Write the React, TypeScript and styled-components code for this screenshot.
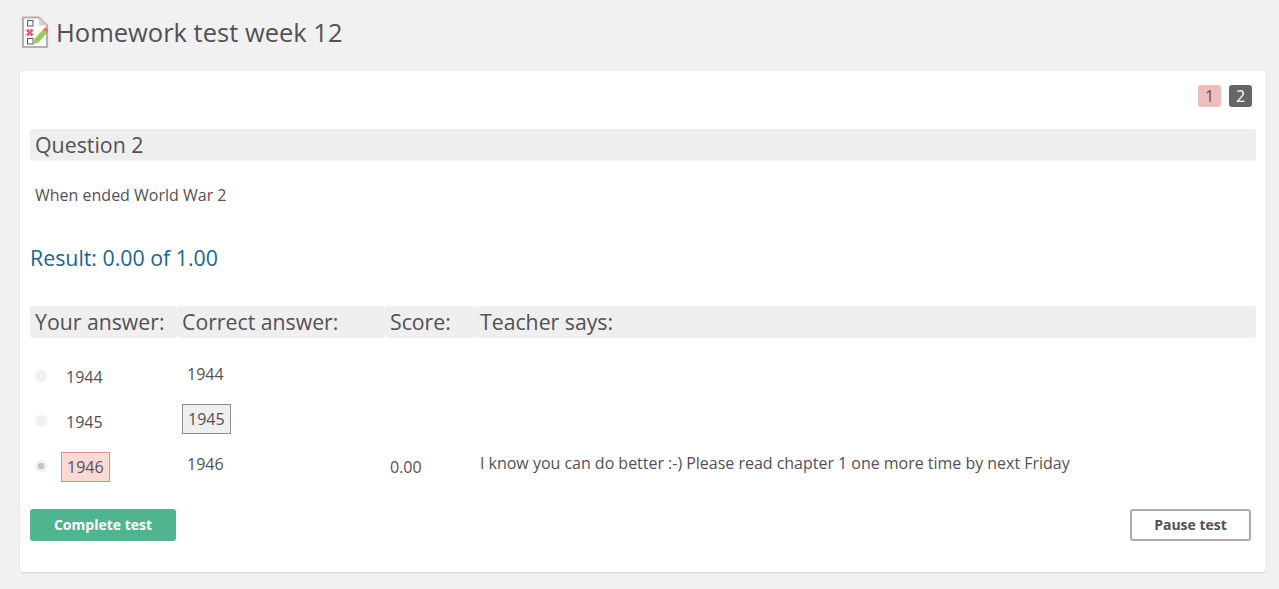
import * as React from 'react';
import styled, { createGlobalStyle } from 'styled-components';

const GlobalStyle = createGlobalStyle`
  html, body {
    margin: 0;
    padding: 0;
    background: #f1f1f1;
  }
  body {
    font-family: "Open Sans", "Liberation Sans", sans-serif;
    color: #555053;
  }
  * {
    box-sizing: border-box;
  }
`;

const rows = [
  { year: '1944', selected: false, correct: false, score: '', comment: '' },
  { year: '1945', selected: false, correct: true, score: '', comment: '' },
  {
    year: '1946',
    selected: true,
    correct: false,
    score: '0.00',
    comment: 'I know you can do better :-) Please read chapter 1 one more time by next Friday',
  },
];

function TestIcon() {
  return (
    <svg width="28" height="33" viewBox="0 0 28 33" aria-hidden="true">
      <path d="M2 1.500h16l8 8v21.500H2z" fill="#fff" stroke="#b5b0b3" strokeWidth="2.200" />
      <path d="M18 1.500v8h8z" fill="#d5d1d3" />
      <rect x="6.500" y="4.500" width="5.500" height="5.500" fill="#fff" stroke="#5d585b" strokeWidth="1" />
      <path d="M6 13.500l5.500 6M11.500 13.500l-5.500 6" stroke="#ea5f68" strokeWidth="2.600" />
      <rect x="6.500" y="22.500" width="5.500" height="5.500" fill="#fff" stroke="#5d585b" strokeWidth="1" />
      <path d="M13.500 23l8.500-9.500 4 3.500-8.500 9.500-5 1.500z" fill="#9bc85a" />
      <path d="M22 13.500l2-2.300 3.300 2.800-1.300 3z" fill="#ee6b6e" />
    </svg>
  );
}

export default function App() {
  return (
    <>
      <GlobalStyle />
      <Page>
        <Header>
          <TestIcon />
          <Title>Homework test week 12</Title>
        </Header>
        <Card>
          <Pager>
            <PageBadge $state="wrong">1</PageBadge>
            <PageBadge $state="current">2</PageBadge>
          </Pager>
          <QuestionTitle>Question 2</QuestionTitle>
          <QuestionText>When ended World War 2</QuestionText>
          <Result>Result: 0.00 of 1.00</Result>
          <AnswerGrid>
            <HeadCell>Your answer:</HeadCell>
            <HeadCell>Correct answer:</HeadCell>
            <HeadCell>Score:</HeadCell>
            <HeadCell>Teacher says:</HeadCell>
            {rows.map((row) => (
              <React.Fragment key={row.year}>
                <YourCell>
                  <Radio $checked={row.selected} />
                  <YourValue $wrong={row.selected}>{row.year}</YourValue>
                </YourCell>
                <CorrectCell>
                  <CorrectValue $correct={row.correct}>{row.year}</CorrectValue>
                </CorrectCell>
                <ScoreCell>{row.score}</ScoreCell>
                <CommentCell>{row.comment}</CommentCell>
              </React.Fragment>
            ))}
          </AnswerGrid>
          <Actions>
            <CompleteButton>Complete test</CompleteButton>
            <PauseButton>Pause test</PauseButton>
          </Actions>
        </Card>
      </Page>
    </>
  );
}

const Page = styled.div`
  width: 1279px;
  height: 589px;
  padding: 16px 13px 0 20px;
  overflow: hidden;
`;
const Header = styled.div`
  height: 33px;
  display: flex;
  align-items: center;
  gap: 7px;
  margin-left: 1px;
`;
const Title = styled.h1`
  margin: 0;
  font-size: 25.500px;
  font-weight: 400;
  line-height: 33px;
  color: #544f59;
`;
const Card = styled.div`
  margin-top: 22px;
  height: 501px;
  padding: 14px 10px 0;
  background: #fff;
  border-radius: 3px;
  box-shadow: 0 1px 2px rgba(0, 0, 0, 0.13);
`;
const Pager = styled.div`
  display: flex;
  justify-content: flex-end;
  gap: 8px;
  margin-right: 4px;
`;
const PageBadge = styled.span<{ $state: 'wrong' | 'current' }>`
  width: 23px;
  height: 22px;
  border-radius: 3px;
  display: flex;
  align-items: center;
  justify-content: center;
  font-size: 16px;
  background: ${(p) => (p.$state === 'wrong' ? '#efbdbd' : '#666666')};
  color: ${(p) => (p.$state === 'wrong' ? '#6b4b4b' : '#ffffff')};
`;
const QuestionTitle = styled.h2`
  margin: 22px 0 0;
  height: 32px;
  padding-left: 5px;
  background: #efefef;
  border-radius: 3px;
  font-size: 21.330px;
  font-weight: 400;
  line-height: 32px;
  color: #555053;
`;
const QuestionText = styled.p`
  margin: 23px 0 0;
  padding-left: 5px;
  font-size: 16px;
  line-height: 22px;
`;
const Result = styled.p`
  margin: 38px 0 0;
  font-size: 21.330px;
  line-height: 27px;
  color: #21648f;
`;
const AnswerGrid = styled.div`
  margin-top: 35px;
  display: grid;
  grid-template-columns: 147px 208px 90px 781px;
  grid-template-rows: 32px 54px 45px 45px;
`;
const HeadCell = styled.div`
  padding-left: 5px;
  background: #efefef;
  border-radius: 3px;
  font-size: 21.250px;
  line-height: 32px;
  color: #555053;
`;
const YourCell = styled.div`
  display: flex;
  align-items: flex-end;
  padding-left: 5px;
  font-size: 16px;
`;
const Radio = styled.span<{ $checked: boolean }>`
  width: 12px;
  height: 12px;
  margin: 0 1px 10px 0;
  border-radius: 50%;
  background: ${(p) =>
    p.$checked ? 'radial-gradient(circle, #c4c4c4 0 3px, #f0f0f0 3.500px)' : '#f0f0f0'};
  flex: none;
`;
const YourValue = styled.span<{ $wrong: boolean }>`
  height: 30px;
  padding: 0 5px;
  margin-left: ${(p) => (p.$wrong ? '13px' : '12px')};
  line-height: 28px;
  border: 1px solid ${(p) => (p.$wrong ? '#e08f87' : 'transparent')};
  background: ${(p) => (p.$wrong ? '#fbd9d5' : 'transparent')};
`;
const CorrectCell = styled.div`
  display: flex;
  align-items: flex-end;
  padding-left: 5px;
  font-size: 16px;
`;
const CorrectValue = styled.span<{ $correct: boolean }>`
  height: 30px;
  padding: 0 5px;
  margin-bottom: 3px;
  margin-left: ${(p) => (p.$correct ? '0' : '-1px')};
  line-height: 28px;
  border: 1px solid ${(p) => (p.$correct ? '#8f8f8f' : 'transparent')};
  background: ${(p) => (p.$correct ? '#efefef' : 'transparent')};
`;
const ScoreCell = styled.div`
  padding: 19px 0 0 5px;
  font-size: 16px;
  line-height: 22px;
`;
const CommentCell = styled.div`
  padding: 15px 0 0 5px;
  font-size: 16px;
  line-height: 22px;
  letter-spacing: -0.020px;
`;
const Actions = styled.div`
  margin-top: 27px;
  display: flex;
  justify-content: space-between;
  padding-right: 5px;
`;
const CompleteButton = styled.button`
  width: 146px;
  height: 32px;
  padding: 0 0 2px;
  border: none;
  border-radius: 3px;
  background: #50b58e;
  color: #fff;
  font-family: inherit;
  font-size: 14px;
  font-weight: 700;
`;
const PauseButton = styled.button`
  width: 121px;
  height: 32px;
  padding: 0 0 2px;
  border: 2px solid #b0a9ac;
  border-radius: 3px;
  background: #fff;
  color: #544f59;
  font-family: inherit;
  font-size: 14px;
  font-weight: 700;
`;
